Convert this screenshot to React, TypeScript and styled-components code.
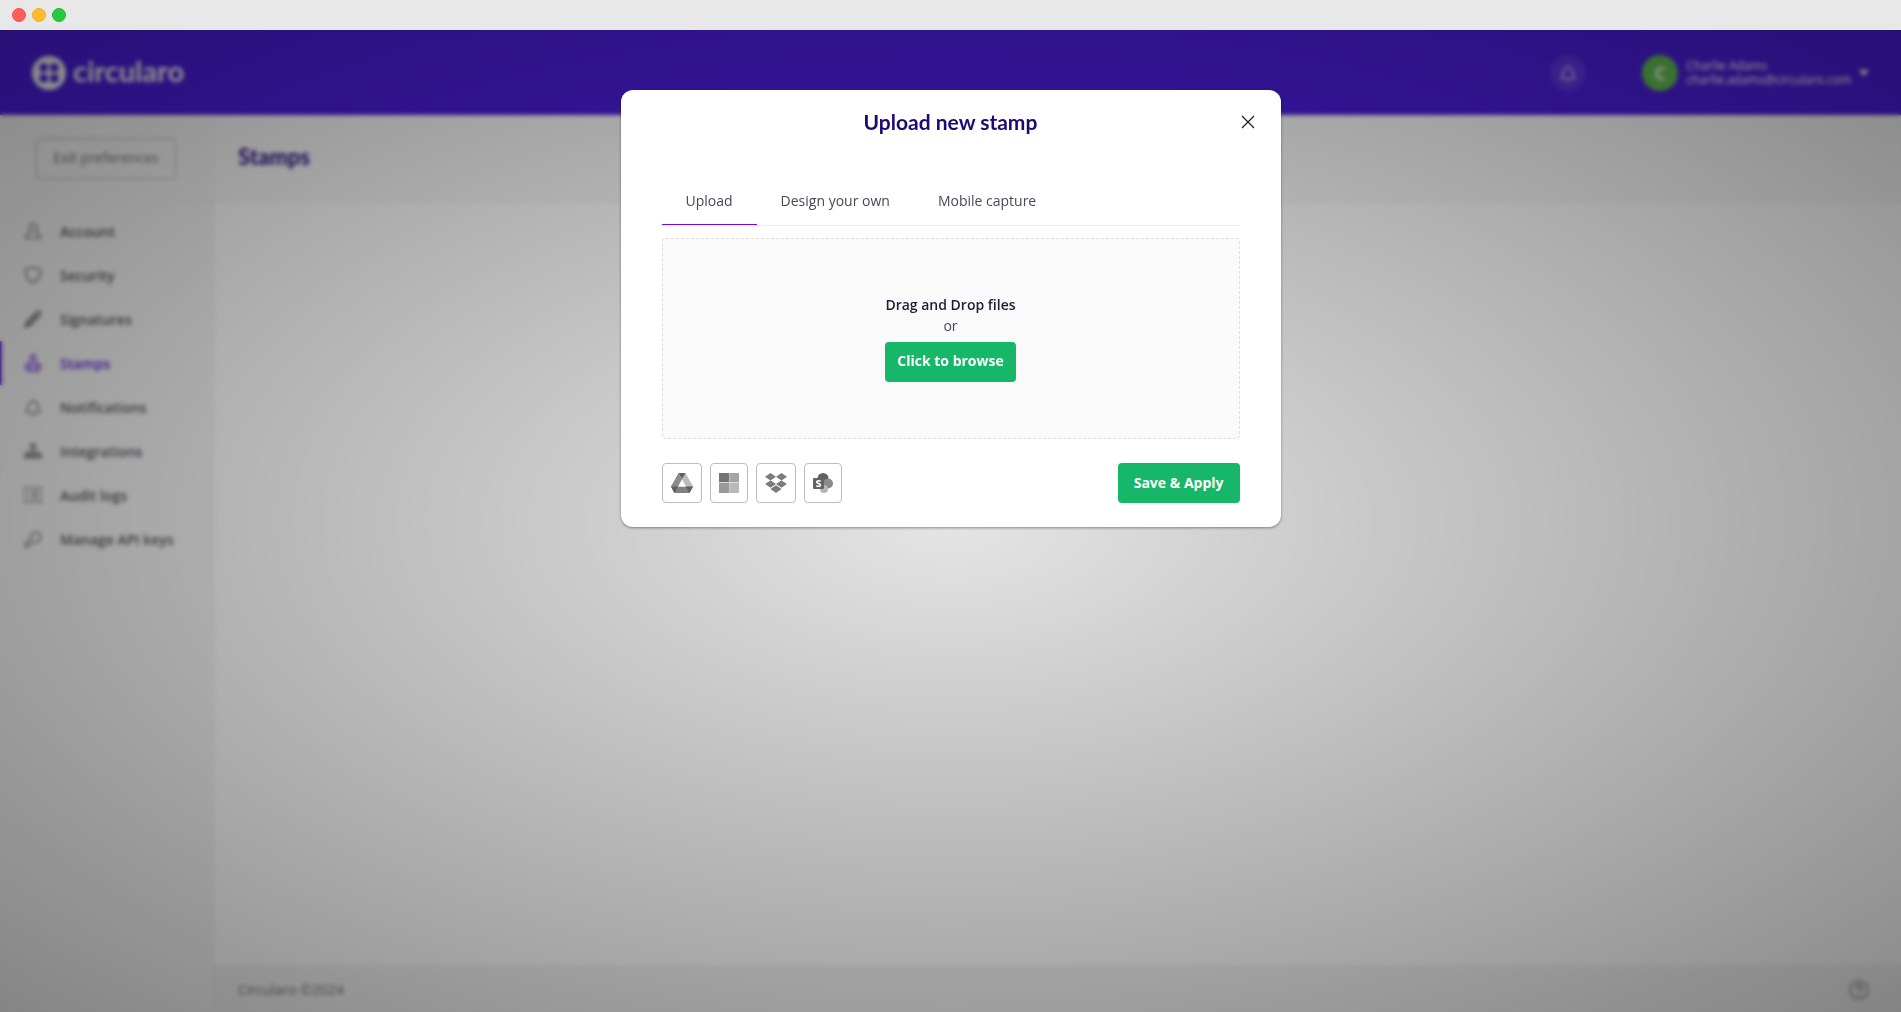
import React from "react";
import styled, { createGlobalStyle, css } from "styled-components";

const Global = createGlobalStyle`
  *, *::before, *::after { box-sizing: border-box; }
  body { margin: 0; font-family: "Open Sans", "Noto Sans", sans-serif; font-size: 14px; color: #2b2640; }
  button, a { font: inherit; color: inherit; }
  h1, h2, p, ul { margin: 0; padding: 0; }
`;

const Window = styled.div`
  display: flex;
  flex-direction: column;
  height: 100vh;
  background: #e8e8e8;
  overflow: hidden;
`;

const TitleBar = styled.div`
  display: flex;
  align-items: center;
  flex: none;
  gap: 6px;
  height: 30px;
  padding: 0 12px;
  background: #e8e8e8;
`;

const Light = styled.span<{ $fill: string; $edge: string }>`
  width: 14px;
  height: 14px;
  border-radius: 50%;
  background: ${(p) => p.$fill};
  border: 1px solid ${(p) => p.$edge};
`;

const Viewport = styled.div`
  position: relative;
  flex: 1;
  min-height: 0;
  overflow: hidden;
  background: #fff;
`;

const Page = styled.div`
  display: flex;
  flex-direction: column;
  height: 100%;
`;

const Header = styled.header`
  display: flex;
  align-items: center;
  justify-content: space-between;
  flex: none;
  height: 85px;
  padding: 0 32px;
  background: #4b1edb;
  color: #f4f4f4;
`;

const Brand = styled.a`
  display: flex;
  align-items: center;
  gap: 7px;
  font-family: "Lato", sans-serif;
  font-size: 29px;
  line-height: 34px;
  font-weight: 700;
  text-decoration: none;
`;

const BrandName = styled.span`
  padding-bottom: 4px;
`;

const HeaderTools = styled.div`
  display: flex;
  align-items: center;
`;

const BellButton = styled.button`
  display: grid;
  place-items: center;
  width: 36px;
  height: 36px;
  margin-right: 56px;
  padding: 0;
  border: 0;
  border-radius: 50%;
  background: rgba(255, 255, 255, 0.1);
`;

const AccountButton = styled.button`
  display: flex;
  align-items: center;
  gap: 8px;
  padding: 0;
  border: 0;
  background: none;
  text-align: left;
  font-size: 12px;
  line-height: 14px;
`;

const Avatar = styled.span`
  display: grid;
  place-items: center;
  width: 36px;
  height: 36px;
  border-radius: 50%;
  background: #5fbd52;
  font-size: 18px;
  font-weight: 700;
`;

const Identity = styled.span`
  display: flex;
  flex-direction: column;
`;

const Caret = styled.span`
  border: 5px solid transparent;
  border-top: 6px solid #fff;
  border-bottom: 0;
`;

const Body = styled.div`
  display: grid;
  grid-template-columns: 214px 1fr;
  flex: 1;
  min-height: 0;
`;

const Sidebar = styled.aside`
  border-right: 1px solid #f0f0f0;
  background: #f6f6f6;
`;

const bar = css`
  display: flex;
  align-items: center;
  height: 87px;
  border-bottom: 1px solid #ededed;
`;

const SidebarTop = styled.div`
  ${bar}
  padding: 0 36px;
`;

const ExitButton = styled.button`
  width: 140px;
  height: 41px;
  padding: 0 0 2px;
  border: 1px solid #b4b4b4;
  border-radius: 4px;
  background: none;
  color: #757575;
`;

const Menu = styled.ul`
  list-style: none;
  padding-top: 7px;
`;

const MenuLink = styled.a<{ $active?: boolean }>`
  display: flex;
  align-items: center;
  gap: 18px;
  height: 44px;
  padding-left: 22px;
  border-left: 2px solid ${(p) => (p.$active ? "#6425e0" : "transparent")};
  color: ${(p) => (p.$active ? "#6425e0" : "#5c5c5c")};
  font-weight: 600;
  text-decoration: none;
`;

const Main = styled.main`
  display: flex;
  flex-direction: column;
  background: #fff;
`;

const PageBar = styled.div`
  ${bar}
  padding: 0 24px 4px;
  background: #f9f9f9;
`;

const PageTitle = styled.h1`
  font-family: "Lato", sans-serif;
  font-size: 22px;
  font-weight: 900;
  color: #3a2190;
`;

const Footer = styled.footer`
  display: flex;
  align-items: center;
  justify-content: space-between;
  height: 47px;
  margin-top: auto;
  padding: 2px 32px 0 24px;
  background: #f4f4f4;
  color: #777;
`;

const Backdrop = styled.div`
  position: absolute;
  inset: 0;
  padding-top: 60px;
  background: radial-gradient(farthest-corner at 50% 50%, rgba(0, 0, 0, 0.1), rgba(0, 0, 0, 0.46));
  backdrop-filter: blur(2px);
`;

const Dialog = styled.section`
  width: 660px;
  max-width: 100%;
  margin: 0 auto;
  padding: 0 41px 24px;
  border-radius: 12px;
  background: #fff;
  box-shadow: 0 1px 3px rgba(0, 0, 0, 0.4);
`;

const DialogHeader = styled.div`
  display: grid;
  grid-template-columns: 20px 1fr 20px;
  align-items: center;
  height: 64px;
  margin: 0 -18px;
`;

const DialogTitle = styled.h2`
  grid-column: 2;
  font-family: "Lato", sans-serif;
  font-size: 21px;
  line-height: 24px;
  font-weight: 700;
  text-align: center;
  color: #1d0a72;
`;

const CloseButton = styled.button`
  display: grid;
  place-items: center;
  width: 20px;
  height: 20px;
  padding: 0;
  border: 0;
  background: none;
`;

const Tabs = styled.div`
  display: flex;
  margin-top: 24px;
  border-bottom: 1px solid #ececec;
`;

const Tab = styled.button<{ $active?: boolean }>`
  height: 47px;
  padding: 0 24px 2px;
  border: 0;
  border-bottom: 1px solid ${(p) => (p.$active ? "#6a0dff" : "transparent")};
  background: none;
  color: #4a465a;
`;

const DropZone = styled.div`
  display: flex;
  flex-direction: column;
  align-items: center;
  justify-content: center;
  height: 201px;
  margin: 12px 0 24px;
  padding-bottom: 2px;
  border: 1px dashed #dedede;
  border-radius: 4px;
  background: #fafafa;
  line-height: 21px;
  color: #4a465a;
`;

const DropTitle = styled.p`
  font-weight: 600;
  color: #211b38;
`;

const PrimaryButton = styled.button<{ $wide?: boolean }>`
  height: 40px;
  padding: 0 ${(p) => (p.$wide ? 16 : 12)}px 2px;
  border: 0;
  border-radius: 4px;
  background: #16b768;
  color: #fff;
  font-weight: 700;
`;

const BrowseButton = styled(PrimaryButton)`
  margin-top: 6px;
`;

const DialogFooter = styled.div`
  display: flex;
  align-items: center;
  justify-content: space-between;
`;

const Sources = styled.div`
  display: flex;
  gap: 8px;
`;

const SourceButton = styled.button`
  display: grid;
  place-items: center;
  height: 40px;
  padding: 0 8px;
  border: 1px solid #bdbdbd;
  border-radius: 4px;
  background: #fff;
`;

const Svg = ({ size = 18, children }: { size?: number; children: React.ReactNode }) => (
  <svg width={size} height={size} viewBox="0 0 18 18" fill="none" stroke="currentColor" strokeWidth="1.2" strokeLinejoin="round" strokeLinecap="round" aria-hidden="true">
    {children}
  </svg>
);

const bell = <path d="M2 14.500h14c-2-2-2-3.500-2-6a5 5 0 0 0-10 0c0 2.500 0 4-2 6ZM7.500 17h3M9 3.500V1.500" />;

const menu = [
  { label: "Account", icon: <path d="M9 1.500a4 4 0 0 0-2 7.300L6 11l-4 2v3.500h14V13l-4-2-1-2.200A4 4 0 0 0 9 1.500Z" /> },
  { label: "Security", icon: <path d="M9 1 6.500 2.500 1.500 3c-.5 6 1.500 11 7.500 14 6-3 8-8 7.500-14l-5-.500Z" /> },
  { label: "Signatures", icon: <path strokeWidth="1.500" d="M1 17l2-5.500L13 2l3.500-.500L16 5 6.500 15 1 17ZM4 14 13 5" /> },
  { label: "Stamps", active: true, icon: <path strokeWidth="1.500" d="M9 1a2.500 2.500 0 0 0-2 4l.5 4-5 1.500-1 2.500 2 1v3h11v-3l2-1-1-2.500-5-1.500.5-4a2.500 2.500 0 0 0-2-4ZM5 13h8" /> },
  { label: "Notifications", icon: bell },
  { label: "Integrations", icon: <path d="M7 2h4v4H7zM9 6v4M3 12v-2h12v2M1 12h4v4H1zM7 12h4v4H7zM13 12h4v4h-4zM9 10v2M8 4h2M2 14h2M8 14h2M14 14h2" /> },
  { label: "Audit logs", icon: <path d="M0 2h18v14H0zM4 6h1M8 6h6M4 9h1M8 9h6M4 12h1M8 12h6" /> },
  { label: "Manage API keys", icon: <path d="M7 9a5 5 0 1 1 3 3l-2 .5-1 2-2 .5-1 2H1v-3Z" /> },
];

const sources = [
  {
    label: "Google Drive",
    icon: (
      <svg width="22" height="20" viewBox="0 0 22 20" aria-hidden="true">
        <path fill="#8b8b8b" d="M7.500 0 0 13.500 3.500 20 11 6.500Z" />
        <path fill="#bcbcbc" d="M7.500 0h7L22 13.500h-7Z" />
        <path fill="#808080" d="M0 13.500h22L18.500 20h-15Z" />
        <path fill="#606060" d="M7.500 0h7L11 6ZM0 13.500h7L3.500 20ZM22 13.500h-7l3.500 6.500Z" />
        <path fill="#fff" d="m11 7 3.600 6.500H7.400Z" />
      </svg>
    ),
  },
  {
    label: "OneDrive",
    icon: (
      <svg width="20" height="20" viewBox="0 0 20 20" aria-hidden="true">
        <path fill="#dcdcdc" d="M0 0h20v20H0z" />
        <path fill="#747474" d="M0 0h10v9H0z" />
        <path fill="#a4a4a4" d="M10.500 0H20v9h-9.500z" />
        <path fill="#9a9a9a" d="M0 10h10v10H0z" />
        <path fill="#b9b9b9" d="M10.500 10H20v10h-9.500z" />
      </svg>
    ),
  },
  {
    label: "Dropbox",
    icon: (
      <svg width="22" height="20" viewBox="0 0 22 20" aria-hidden="true">
        <path fill="#7b7b7b" d="M5.500 0 11 3.700 5.500 7.400 0 3.700ZM16.500 0 22 3.700l-5.500 3.700L11 3.700ZM5.500 7.400l5.500 3.700-5.500 3.700L0 11.100ZM16.500 7.400l5.500 3.700-5.500 3.700-5.500-3.700ZM11 12.300l5.500 3.800L11 20l-5.500-3.900Z" />
      </svg>
    ),
  },
  {
    label: "SharePoint",
    icon: (
      <svg width="20" height="20" viewBox="0 0 20 20" aria-hidden="true">
        <circle cx="10" cy="5.500" r="5.500" fill="#5f5f5f" />
        <circle cx="15" cy="10.500" r="5" fill="#8a8a8a" />
        <circle cx="11" cy="16" r="4" fill="#b5b5b5" />
        <rect y="5" width="11" height="11" rx="1" fill="#646464" />
        <path fill="none" stroke="#fff" strokeWidth="1.600" d="M7.700 8.300C6 7.300 3.700 7.700 3.700 9c0 1.700 3.800 1.200 3.800 3 0 1.500-2.500 1.700-4.200.7" />
      </svg>
    ),
  },
];

export default function App() {
  return (
    <Window>
      <Global />
      <TitleBar>
        <Light $fill="#ff5f57" $edge="#f0544d" />
        <Light $fill="#ffbd2e" $edge="#efae28" />
        <Light $fill="#28c840" $edge="#22b638" />
      </TitleBar>
      <Viewport>
        <Page>
          <Header>
            <Brand href="#">
              <svg width="34" height="34" viewBox="0 0 34 34" aria-hidden="true">
                <circle cx="17" cy="17" r="17" fill="#f4f4f4" />
                <path fill="#4b1edb" d="M16 16h-4.500a4 4 0 0 1-4-4v-.500a4 4 0 0 1 4-4h.500a4 4 0 0 1 4 4ZM18 16v-4.500a4 4 0 0 1 4-4h.500a4 4 0 0 1 4 4v.500a4 4 0 0 1-4 4ZM16 18v4.500a4 4 0 0 1-4 4h-.500a4 4 0 0 1-4-4v-.500a4 4 0 0 1 4-4ZM18 18h4.500a4 4 0 0 1 4 4v.500a4 4 0 0 1-4 4h-.500a4 4 0 0 1-4-4Z" />
                <circle cx="17" cy="17" r="3.500" fill="#f4f4f4" />
              </svg>
              <BrandName>circularo</BrandName>
            </Brand>
            <HeaderTools>
              <BellButton aria-label="Notifications"><Svg>{bell}</Svg></BellButton>
              <AccountButton>
                <Avatar>C</Avatar>
                <Identity><span>Charlie Adams</span><span>charlie.adams@circularo.com</span></Identity>
                <Caret />
              </AccountButton>
            </HeaderTools>
          </Header>
          <Body>
            <Sidebar>
              <SidebarTop><ExitButton>Exit preferences</ExitButton></SidebarTop>
              <nav>
                <Menu>
                  {menu.map((m) => (
                    <li key={m.label}>
                      <MenuLink href="#" $active={m.active}><Svg>{m.icon}</Svg>{m.label}</MenuLink>
                    </li>
                  ))}
                </Menu>
              </nav>
            </Sidebar>
            <Main>
              <PageBar><PageTitle>Stamps</PageTitle></PageBar>
              <Footer>
                <span>Circularo ©2024</span>
                <Svg size={20}><circle cx="9" cy="9" r="8" /><path d="M6.500 7a2.500 2.500 0 1 1 3.500 2.300c-.700.300-1 .700-1 1.400M9 13v.200" /></Svg>
              </Footer>
            </Main>
          </Body>
        </Page>
        <Backdrop>
          <Dialog role="dialog" aria-labelledby="dialog-title">
            <DialogHeader>
              <DialogTitle id="dialog-title">Upload new stamp</DialogTitle>
              <CloseButton aria-label="Close">
                <svg width="14" height="14" viewBox="0 0 14 14" stroke="#1d1830" strokeWidth="1.200" aria-hidden="true"><path d="m1 1 12 12M13 1 1 13" /></svg>
              </CloseButton>
            </DialogHeader>
            <Tabs role="tablist">
              <Tab role="tab" aria-selected $active>Upload</Tab>
              <Tab role="tab">Design your own</Tab>
              <Tab role="tab">Mobile capture</Tab>
            </Tabs>
            <DropZone>
              <DropTitle>Drag and Drop files</DropTitle>
              <p>or</p>
              <BrowseButton>Click to browse</BrowseButton>
            </DropZone>
            <DialogFooter>
              <Sources>
                {sources.map((s) => (
                  <SourceButton key={s.label} aria-label={s.label}>{s.icon}</SourceButton>
                ))}
              </Sources>
              <PrimaryButton $wide>Save &amp; Apply</PrimaryButton>
            </DialogFooter>
          </Dialog>
        </Backdrop>
      </Viewport>
    </Window>
  );
}
